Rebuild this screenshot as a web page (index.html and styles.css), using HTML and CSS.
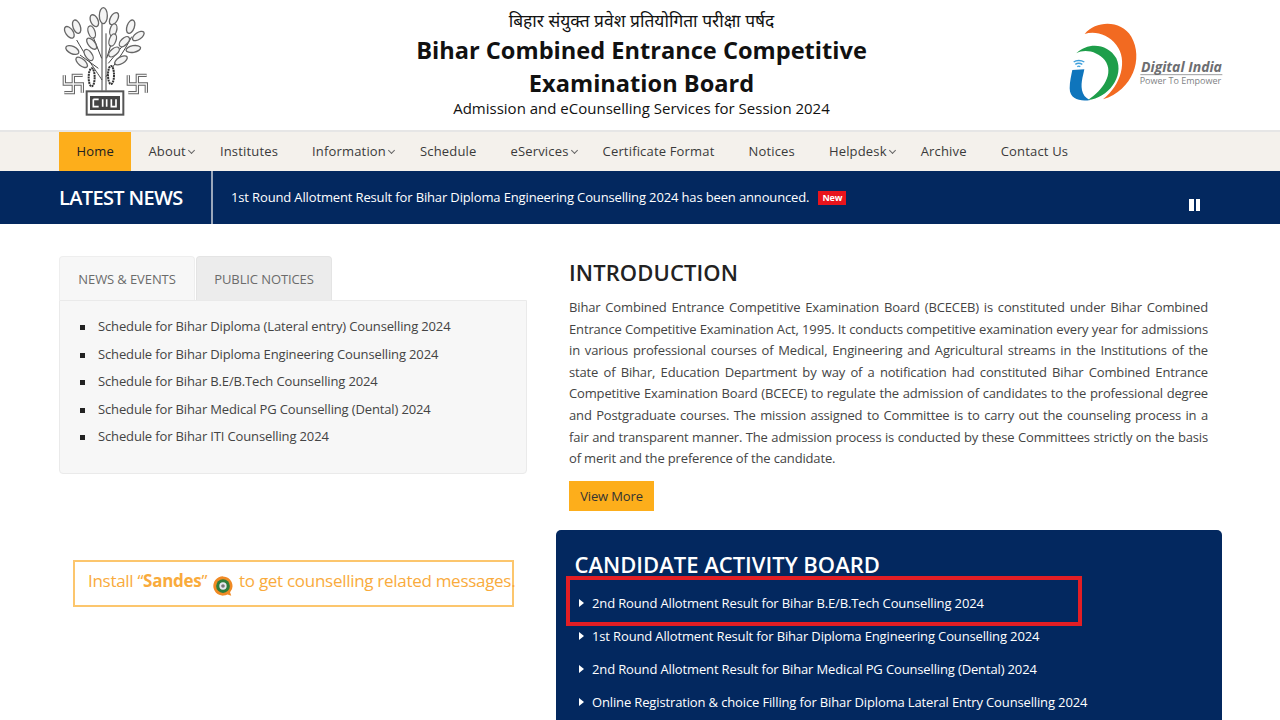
FILE: index.html
```html
<!DOCTYPE html>
<html lang="en">
<head>
<meta charset="utf-8">
<title>BCECEB</title>
<link rel="stylesheet" href="styles.css">
</head>
<body>
<header class="site-header">
  <svg class="emblem" viewBox="60 0 270 360" width="90" height="120" aria-label="Bihar emblem">
    <g class="stem">
      <path d="M186 70V272M198 100V272M186 240C170 215 150 190 110 120M198 230C225 190 250 160 275 110M155 100L185 175M225 95L200 175M120 165L175 205M205 190L250 135"/>
    </g>
    <g class="leaf">
      <ellipse cx="190" cy="47" rx="12" ry="24"/>
      <ellipse cx="222" cy="56" rx="11" ry="20" transform="rotate(30 222 56)"/>
      <ellipse cx="163" cy="62" rx="11" ry="19" transform="rotate(-25 163 62)"/>
      <ellipse cx="110" cy="80" rx="11" ry="21" transform="rotate(-20 110 80)"/>
      <ellipse cx="272" cy="80" rx="11" ry="21" transform="rotate(20 272 80)"/>
      <ellipse cx="155" cy="96" rx="10" ry="19" transform="rotate(-20 155 96)"/>
      <ellipse cx="220" cy="90" rx="10" ry="19" transform="rotate(15 220 90)"/>
      <ellipse cx="88" cy="97" rx="11" ry="20" transform="rotate(-35 88 97)"/>
      <ellipse cx="295" cy="108" rx="10" ry="20" transform="rotate(55 295 108)"/>
      <ellipse cx="155" cy="131" rx="10" ry="20" transform="rotate(-40 155 131)"/>
      <ellipse cx="218" cy="120" rx="10" ry="19" transform="rotate(20 218 120)"/>
      <ellipse cx="253" cy="125" rx="10" ry="19" transform="rotate(45 253 125)"/>
      <ellipse cx="97" cy="150" rx="11" ry="21" transform="rotate(-65 97 150)"/>
      <ellipse cx="280" cy="147" rx="10" ry="22" transform="rotate(80 280 147)"/>
      <ellipse cx="146" cy="165" rx="10" ry="19" transform="rotate(-35 146 165)"/>
      <ellipse cx="222" cy="156" rx="10" ry="19" transform="rotate(50 222 156)"/>
      <ellipse cx="125" cy="187" rx="10" ry="21" transform="rotate(-50 125 187)"/>
      <ellipse cx="243" cy="181" rx="10" ry="21" transform="rotate(60 243 181)"/>
    </g>
    <g class="pods">
      <ellipse cx="155" cy="232" rx="9" ry="27"/>
      <ellipse cx="213" cy="225" rx="9" ry="27"/>
    </g>
    <path class="sw-outer" d="M128 226H100V278H73M73 226V252H127V278"/>
    <path class="sw-inner" d="M128 226H100V278H73M73 226V252H127V278"/>
    <path class="sw-outer" d="M320 226H292V278H265M265 226V252H319V278"/>
    <path class="sw-inner" d="M320 226H292V278H265M265 226V252H319V278"/>
    <rect class="plinth" x="140" y="274" width="110" height="70"/>
    <rect class="plinth-inner" x="150" y="288" width="90" height="42"/>
    <path class="plinth-mark" d="M160 298H176M160 298V320H176M188 298V320M200 320V298M214 298V320H228V298"/>
  </svg>
  <div class="titles">
    <p class="title-hi">बिहार संयुक्त प्रवेश प्रतियोगिता परीक्षा पर्षद</p>
    <h1 class="title-en">Bihar Combined Entrance Competitive<br>Examination Board</h1>
    <p class="title-sub">Admission and eCounselling Services for Session 2024</p>
  </div>
  <svg class="digital" viewBox="55 30 465 255" width="155" height="85" aria-label="Digital India">
    <path class="di-orange" d="M105 72C140 30 215 30 245 80C282 145 250 240 160 268C215 225 235 150 200 105C175 72 135 62 105 72Z"/>
    <path class="di-green" d="M80 130C115 95 175 100 200 145C225 200 175 265 115 270C160 240 195 190 165 150C145 125 105 115 80 130Z"/>
    <path class="di-blue" d="M68 180L104 178C100 200 90 225 100 250C105 262 115 268 122 270C95 275 60 270 60 235C60 215 65 195 68 180Z"/>
    <path class="di-wifi" d="M72 156C80 150 94 150 104 156M77 163C83 159 91 159 98 163M83 170C85 168 89 168 92 170"/>
    <text class="di-name" x="274" y="186">Digital India</text>
    <path class="di-rule" d="M272 194H518"/>
    <text class="di-tag" x="270" y="223">Power To Empower</text>
  </svg>
</header>

<nav class="main-nav">
  <a class="nav-link active">Home</a>
  <a class="nav-link has-caret">About</a>
  <a class="nav-link">Institutes</a>
  <a class="nav-link has-caret">Information</a>
  <a class="nav-link">Schedule</a>
  <a class="nav-link has-caret">eServices</a>
  <a class="nav-link">Certificate Format</a>
  <a class="nav-link">Notices</a>
  <a class="nav-link has-caret">Helpdesk</a>
  <a class="nav-link">Archive</a>
  <a class="nav-link">Contact Us</a>
</nav>

<section class="news-bar">
  <h2 class="news-label">LATEST NEWS</h2>
  <div class="news-ticker">
    <span>1st Round Allotment Result for Bihar Diploma Engineering Counselling 2024 has been announced.</span>
    <span class="badge-new">New</span>
  </div>
  <div class="pause"><i></i><i></i></div>
</section>

<main class="content">
  <div class="col-left">
    <div class="tabs">
      <div class="tab current">NEWS &amp; EVENTS</div>
      <div class="tab">PUBLIC NOTICES</div>
    </div>
    <div class="tab-panel">
      <ul class="event-list">
        <li>Schedule for Bihar Diploma (Lateral entry) Counselling 2024</li>
        <li>Schedule for Bihar Diploma Engineering Counselling 2024</li>
        <li>Schedule for Bihar B.E/B.Tech Counselling 2024</li>
        <li>Schedule for Bihar Medical PG Counselling (Dental) 2024</li>
        <li>Schedule for Bihar ITI Counselling 2024</li>
      </ul>
    </div>
    <div class="sandes">
      <span>Install “<b>Sandes</b>”</span>
      <svg class="sandes-icon" viewBox="0 0 24 24" width="22" height="22">
        <path class="s-orange" d="M12 1.5a10.5 10.5 0 1 0 5 19.7l4 1.3-1.3-3.6A10.5 10.5 0 0 0 12 1.5Z"/>
        <circle class="s-green" cx="12" cy="12" r="7.5"/>
        <circle class="s-white" cx="12" cy="12" r="4"/>
        <circle class="s-grey" cx="12" cy="12" r="2"/>
      </svg>
      <span>to get counselling related messages.</span>
    </div>
  </div>

  <div class="col-right">
    <section class="intro">
      <h2 class="intro-title">INTRODUCTION</h2>
      <p class="intro-text">Bihar Combined Entrance Competitive Examination Board (BCECEB) is constituted under Bihar Combined Entrance Competitive Examination Act, 1995. It conducts competitive examination every year for admissions in various professional courses of Medical, Engineering and Agricultural streams in the Institutions of the state of Bihar, Education Department by way of a notification had constituted Bihar Combined Entrance Competitive Examination Board (BCECE) to regulate the admission of candidates to the professional degree and Postgraduate courses. The mission assigned to Committee is to carry out the counseling process in a fair and transparent manner. The admission process is conducted by these Committees strictly on the basis of merit and the preference of the candidate.</p>
      <a class="btn-more">View More</a>
    </section>
    <section class="board">
      <h2 class="board-title">CANDIDATE ACTIVITY BOARD</h2>
      <ul class="board-list">
        <li>2nd Round Allotment Result for Bihar B.E/B.Tech Counselling 2024</li>
        <li>1st Round Allotment Result for Bihar Diploma Engineering Counselling 2024</li>
        <li>2nd Round Allotment Result for Bihar Medical PG Counselling (Dental) 2024</li>
        <li>Online Registration &amp; choice Filling for Bihar Diploma Lateral Entry Counselling 2024</li>
      </ul>
      <div class="highlight"></div>
    </section>
  </div>
</main>
</body>
</html>
```
FILE: styles.css
```css
* { box-sizing: border-box; }
html, body { height: 720px; overflow: hidden; }
body {
  margin: 0;
  background: #fff;
  color: #333;
  font-family: "Open Sans", "Noto Sans", sans-serif;
  font-size: 13px;
}
p, h1, h2, ul { margin: 0; padding: 0; }

.site-header {
  height: 130px;
  display: grid;
  grid-template-columns: 1fr auto 1fr;
  padding: 0 57px 0 60px;
}
.stem path { fill: none; stroke: #444; stroke-width: 3; }
.leaf ellipse { fill: #f4f4f4; stroke: #666; stroke-width: 4; }
.pods ellipse { fill: #fff; stroke: #333; stroke-width: 6; stroke-dasharray: 6 2; }
.sw-outer { fill: none; stroke: #666; stroke-width: 10; }
.sw-inner { fill: none; stroke: #f4f4f4; stroke-width: 4; }
.plinth { fill: #fff; stroke: #555; stroke-width: 6; }
.plinth-inner { fill: #444; }
.plinth-mark { fill: none; stroke: #fff; stroke-width: 5; }

.titles { text-align: center; color: #111; }
.title-hi { font-family: "Noto Sans", "Noto Sans Devanagari", sans-serif; font-size: 17.4px; line-height: 24px; margin-top: 8px; }
.title-en { font-size: 23.6px; line-height: 33px; font-weight: 700; margin-top: 2px; }
.title-sub { font-size: 15px; line-height: 20px; font-weight: 500; margin-top: -2px; }

.digital { justify-self: end; margin-top: 20px; }
.di-orange { fill: #f26a21; }
.di-green { fill: #1e9e4a; }
.di-blue { fill: #0f75bc; }
.di-wifi { fill: none; stroke: #3fa0dc; stroke-width: 4; }
.di-name { font-family: "Open Sans", sans-serif; font-size: 42px; font-weight: 700; font-style: italic; fill: #6d6e71; }
.di-rule { stroke: #6d6e71; stroke-width: 2; }
.di-tag { font-family: "Open Sans", sans-serif; font-size: 27px; fill: #808285; }

.main-nav {
  height: 41px;
  display: flex;
  padding: 0 0 0 59px;
  background: #f4f1ec;
  border-top: 2px solid #e6e6e6;
}
.nav-link {
  position: relative;
  padding: 0 17px;
  line-height: 38px;
  color: #3a3a3a;
  white-space: nowrap;
  letter-spacing: 0.17px;
}
.nav-link.active { background: #fdae1b; color: #222; padding: 0 17.5px; }
.has-caret::after {
  content: "";
  position: absolute;
  right: 9px;
  top: 16px;
  width: 4px;
  height: 4px;
  border-right: 1px solid #666;
  border-bottom: 1px solid #666;
  transform: rotate(45deg);
}

.news-bar {
  height: 53px;
  display: flex;
  align-items: stretch;
  padding-left: 59px;
  background: #03285f;
  color: #fff;
  position: relative;
}
.news-label {
  width: 154px;
  border-right: 2px solid #9aa7bb;
  font-size: 20px;
  font-weight: 600;
  line-height: 53px;
  letter-spacing: -0.65px;
}
.news-ticker {
  display: flex;
  align-items: center;
  gap: 9px;
  padding-left: 18px;
  font-weight: 500;
  padding-bottom: 2px;
  letter-spacing: -0.14px;
}
.badge-new {
  background: #e8141c;
  font-size: 9px;
  font-weight: 700;
  padding: 0 4px;
  line-height: 14px;
  margin-top: 3px;
}
.pause { position: absolute; left: 1189px; top: 28px; display: flex; gap: 2px; }
.pause i { display: block; width: 4.5px; height: 12px; background: #fff; }

.content {
  display: grid;
  grid-template-columns: 468px 666px;
  column-gap: 29px;
  margin-left: 59px;
}
.col-left { padding-top: 32px; }
.tabs { display: flex; gap: 1px; }
.tab {
  width: 136px;
  height: 44px;
  text-align: center;
  line-height: 44px;
  color: #6b6b6b;
  background: #ececec;
  border: 1px solid #e4e4e4;
  border-bottom: 0;
  border-radius: 4px 4px 0 0;
  letter-spacing: -0.1px;
}
.tab.current { background: #f7f7f7; border-color: #eee; }
.tab-panel {
  height: 174px;
  background: #f7f7f7;
  border: 1px solid #eaeaea;
  border-radius: 0 0 4px 4px;
  padding-top: 12px;
}
.event-list { list-style: none; }
.event-list li {
  position: relative;
  padding-left: 38px;
  line-height: 27.5px;
  color: #444;
  letter-spacing: -0.14px;
}
.event-list li::before {
  content: "";
  position: absolute;
  left: 20px;
  top: 12px;
  width: 5px;
  height: 5px;
  background: #222;
}
.sandes {
  margin: 86px 0 0 14px;
  width: 441px;
  height: 47px;
  display: flex;
  align-items: center;
  gap: 5px;
  padding: 0 0 7px 13px;
  border: 2px solid #fcc66d;
  color: #f9ab3c;
  font-size: 17px;
  white-space: nowrap;
  letter-spacing: -0.29px;
}
.sandes-icon { flex: none; margin-top: 12px; }
.s-orange { fill: #f08a24; }
.s-green { fill: #2f7d3a; }
.s-white { fill: #e8e8f0; }
.s-grey { fill: #777; }

.intro { padding: 33px 14px 0 13px; }
.intro-title {
  font-size: 22px;
  font-weight: 600;
  line-height: 30px;
  color: #222;
  letter-spacing: 0.1px;
}
.intro-text {
  margin-top: 10px;
  line-height: 21.6px;
  text-align: justify;
  color: #444;
  letter-spacing: -0.15px;
}
.btn-more {
  display: block;
  width: 85px;
  height: 30px;
  margin-top: 11px;
  background: #fdae1b;
  color: #333;
  text-align: center;
  line-height: 30px;
  letter-spacing: -0.15px;
}
.board {
  position: relative;
  margin-top: 19px;
  height: 300px;
  padding: 19px 19px 0 18.5px;
  background: #03285f;
  border-radius: 5px;
  color: #fff;
}
.board-title { font-size: 22px; font-weight: 600; line-height: 30px; }
.board-list { list-style: none; margin-top: 8px; }
.board-list li {
  position: relative;
  padding-left: 17.5px;
  line-height: 33px;
  font-weight: 500;
  letter-spacing: -0.14px;
}
.board-list li::before {
  content: "";
  position: absolute;
  left: 4px;
  top: 12px;
  border-left: 5px solid #fff;
  border-top: 4px solid transparent;
  border-bottom: 4px solid transparent;
}
.highlight {
  position: absolute;
  left: 10px;
  top: 46px;
  width: 516px;
  height: 50px;
  border: 4px solid #e31e24;
}
```
